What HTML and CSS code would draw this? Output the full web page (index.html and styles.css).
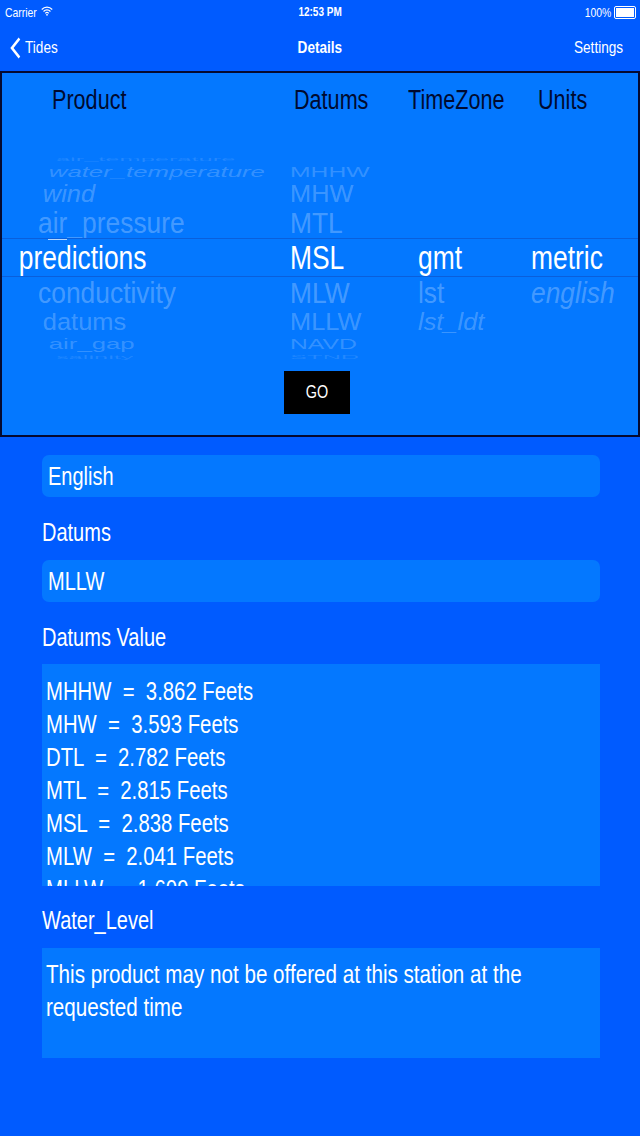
FILE: index.html
```html
<!DOCTYPE html>
<html lang="en">
<head>
    <meta charset="UTF-8">
    <meta name="viewport" content="width=device-width, initial-scale=1.0">
    <title>Details</title>
    <link rel="stylesheet" href="styles.css">
</head>
<body>
    <div class="status-bar">
        <div class="status-left">
            <span class="nar">Carrier</span>
            <svg class="wifi" viewBox="0 0 16 12" preserveAspectRatio="none">
                <path d="M1 4.2a10 10 0 0 1 14 0M3.4 6.6a6.6 6.6 0 0 1 9.2 0M5.7 8.8a3.3 3.3 0 0 1 4.6 0" fill="none" stroke="#fff" stroke-width="1.5"/>
                <path d="M8 12l-1.5-1.6a2 2 0 0 1 3 0z" fill="#fff"/>
            </svg>
        </div>
        <div class="status-time nar nar-c">12:53 PM</div>
        <div class="status-right">
            <span class="nar nar-r">100%</span>
            <div class="battery"><div class="battery-fill"></div></div>
        </div>
    </div>

    <div class="nav-bar">
        <div class="nav-back">
            <svg class="chevron" viewBox="0 0 14 22" preserveAspectRatio="none">
                <path d="M12 1.5L2.5 11l9.5 9.5" fill="none" stroke="#fff" stroke-width="3"/>
            </svg>
            <span class="nar">Tides</span>
        </div>
        <div class="nav-title nar nar-c">Details</div>
        <div class="nav-action nar nar-r">Settings</div>
    </div>

    <div class="panel">
        <div class="picker-head">
            <span class="nar">Product</span>
            <span class="nar">Datums</span>
            <span class="nar">TimeZone</span>
            <span class="nar">Units</span>
        </div>
        <div class="wheel">
            <div class="row d4"><span class="product">air_temperature</span><span></span><span></span><span></span></div>
            <div class="row d3"><span class="product slant">water_temperature</span><span>MHHW</span><span></span><span></span></div>
            <div class="row d2"><span class="product slant">wind</span><span>MHW</span><span></span><span></span></div>
            <div class="row d1"><span class="product">air_pressure</span><span>MTL</span><span></span><span></span></div>
            <div class="row d0"><span class="product">predictions</span><span>MSL</span><span>gmt</span><span>metric</span></div>
            <div class="row d1"><span class="product">conductivity</span><span>MLW</span><span>lst</span><span class="slant">english</span></div>
            <div class="row d2"><span class="product">datums</span><span>MLLW</span><span class="slant">lst_ldt</span><span></span></div>
            <div class="row d3"><span class="product">air_gap</span><span>NAVD</span><span></span><span></span></div>
            <div class="row d4"><span class="product">salinity</span><span>STND</span><span></span><span></span></div>
            <div class="band"><div class="band-mark"></div></div>
        </div>
        <button class="go-btn"><span class="nar nar-c">GO</span></button>
    </div>

    <div class="content">
        <div class="field"><div class="nar">English</div></div>
        <div class="label label-first nar">Datums</div>
        <div class="field"><div class="nar">MLLW</div></div>
        <div class="label nar">Datums Value</div>
        <div class="text-box datums-box">
            <div class="nar">MHHW  =  3.862 Feets</div>
            <div class="nar">MHW  =  3.593 Feets</div>
            <div class="nar">DTL  =  2.782 Feets</div>
            <div class="nar">MTL  =  2.815 Feets</div>
            <div class="nar">MSL  =  2.838 Feets</div>
            <div class="nar">MLW  =  2.041 Feets</div>
            <div class="nar">MLLW  =  1.609 Feets</div>
        </div>
        <div class="label water-label nar">Water_Level</div>
        <div class="text-box water-box">
            <div class="nar">This product may not be offered at this station at the</div>
            <div class="nar">requested time</div>
        </div>
    </div>
</body>
</html>
```

FILE: styles.css
```css
body {
    margin: 0;
    font-family: "Liberation Sans", Arial, sans-serif;
    color: white;
    background-color: #005bff;
}
/* the screenshot's text is squeezed sideways, there is no narrow font to use */
.nar {
    display: block;
    white-space: pre;
    transform: scaleX(0.8);
    transform-origin: left center;
}
.nar-c {
    transform-origin: center;
}
.nar-r {
    transform-origin: right center;
}
.status-bar {
    display: grid;
    grid-template-columns: 1fr auto 1fr;
    align-items: center;
    height: 24px;
    padding: 0 4px 0 5px;
    font-size: 13px;
}
.status-left {
    display: flex;
    align-items: center;
    gap: 4px;
}
.wifi {
    width: 12px;
    height: 10px;
    margin: 0 0 3px -8px;
}
.status-time {
    font-weight: bold;
    font-size: 12.5px;
}
.status-right {
    display: flex;
    justify-content: flex-end;
    align-items: center;
    gap: 3px;
}
.battery {
    width: 18px;
    height: 9px;
    border: 1px solid white;
    border-radius: 2px;
    padding: 1px;
}
.battery-fill {
    height: 100%;
    background-color: white;
}
.nav-bar {
    display: grid;
    grid-template-columns: 1fr auto 1fr;
    align-items: center;
    height: 47px;
    padding: 0 10px;
    font-size: 17px;
}
.nav-back {
    display: flex;
    align-items: center;
    gap: 4px;
}
.chevron {
    width: 11px;
    height: 22px;
}
.nav-title {
    font-weight: bold;
}
.nav-action {
    text-align: right;
    margin-right: 7px;
}
.panel {
    height: 366px;
    box-sizing: border-box;
    border: 2px solid #050a30;
    background-color: #0478ff;
}
.picker-head {
    display: grid;
    grid-template-columns: 242px 114px 130px 1fr;
    align-items: center;
    height: 50px;
    padding: 2px 0 0 50px;
    font-size: 27px;
    color: #000a30;
}
.wheel {
    position: relative;
    height: 206px;
    margin-top: 30px;
    font-size: 33px;
}
.row {
    display: grid;
    grid-template-columns: 288px 128px 113px 1fr;
    white-space: nowrap;
}
.row span {
    display: block;
    transform-origin: left center;
}
.d0 {
    height: 38px;
    line-height: 38px;
}
.d0 span {
    transform: scaleX(0.8);
}
.d1 {
    height: 32px;
    line-height: 32px;
    color: rgba(255, 255, 255, 0.27);
}
.d1 span {
    transform: scale(0.8, 0.9);
}
.d2 {
    height: 26px;
    line-height: 26px;
    color: rgba(255, 255, 255, 0.24);
}
.d2 span {
    transform: scale(0.77, 0.72);
}
.d3 {
    height: 18px;
    line-height: 18px;
    color: rgba(255, 255, 255, 0.2);
}
.d3 span {
    transform: scale(0.75, 0.46);
}
.d3 .product {
    transform: scale(0.78, 0.46);
}
.d4 {
    height: 8px;
    line-height: 8px;
    color: rgba(255, 255, 255, 0.12);
}
.d4 span {
    transform: scale(0.77, 0.16);
}
/* these sit inside the scaled span, so they shrink with it */
.d0 .product { padding-left: 21px; }
.d1 .product { padding-left: 45px; }
.d2 .product { padding-left: 53px; }
.d3 .product { padding-left: 60px; }
.d4 .product { padding-left: 70px; }
.slant {
    font-style: italic;
}
.band {
    position: absolute;
    top: 83px;
    left: 0;
    right: 0;
    height: 37px;
    border-top: 1px solid #0a5fdc;
    border-bottom: 1px solid #0a5fdc;
}
.band-mark {
    width: 19px;
    height: 1px;
    margin-left: 46px;
    background-color: rgba(255, 255, 255, 0.7);
}
.go-btn {
    display: block;
    width: 66px;
    height: 43px;
    margin: 10px 0 0 282px;
    padding: 0;
    border: none;
    background-color: black;
    color: white;
    font-family: inherit;
    font-size: 18px;
}
.content {
    width: 558px;
    margin: 18px 0 0 42px;
    font-size: 25px;
}
.field {
    height: 42px;
    line-height: 42px;
    padding-left: 6px;
    border-radius: 7px;
    background-color: #0478ff;
}
.label {
    height: 62px;
    line-height: 70px;
}
.label-first {
    height: 63px;
}
.water-label {
    line-height: 68px;
}
.text-box {
    box-sizing: border-box;
    padding: 10px 4px;
    font-size: 25.8px;
    line-height: 33px;
    background-color: #0478ff;
}
.datums-box {
    height: 222px;
    padding-top: 11px;
    font-size: 25.4px;
    overflow: hidden;
}
.water-box {
    height: 110px;
}
```
